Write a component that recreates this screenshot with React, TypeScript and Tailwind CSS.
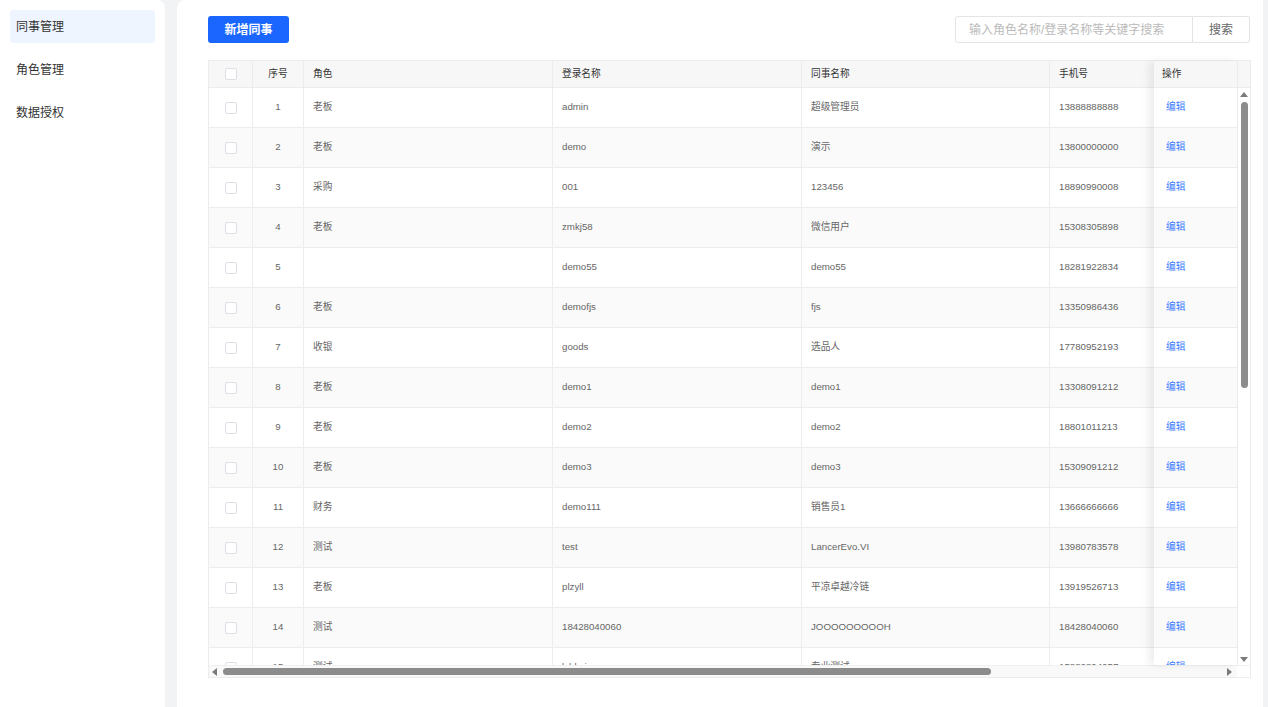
import React from "react";

type Row = { id: number; role: string; login: string; name: string; phone: string };

const rows: Row[] = [
  { id: 1, role: "老板", login: "admin", name: "超级管理员", phone: "13888888888" },
  { id: 2, role: "老板", login: "demo", name: "演示", phone: "13800000000" },
  { id: 3, role: "采购", login: "001", name: "123456", phone: "18890990008" },
  { id: 4, role: "老板", login: "zmkj58", name: "微信用户", phone: "15308305898" },
  { id: 5, role: "", login: "demo55", name: "demo55", phone: "18281922834" },
  { id: 6, role: "老板", login: "demofjs", name: "fjs", phone: "13350986436" },
  { id: 7, role: "收银", login: "goods", name: "选品人", phone: "17780952193" },
  { id: 8, role: "老板", login: "demo1", name: "demo1", phone: "13308091212" },
  { id: 9, role: "老板", login: "demo2", name: "demo2", phone: "18801011213" },
  { id: 10, role: "老板", login: "demo3", name: "demo3", phone: "15309091212" },
  { id: 11, role: "财务", login: "demo111", name: "销售员1", phone: "13666666666" },
  { id: 12, role: "测试", login: "test", name: "LancerEvo.VI", phone: "13980783578" },
  { id: 13, role: "老板", login: "plzyll", name: "平凉卓越冷链", phone: "13919526713" },
  { id: 14, role: "测试", login: "18428040060", name: "JOOOOOOOOOH", phone: "18428040060" },
  { id: 15, role: "测试", login: "lybbxj", name: "专业测试", phone: "15882894257" },
];

function Checkbox() {
  return <span className="block w-[12px] h-[12px] border border-[#dcdfe6] rounded-[2px] bg-white" />;
}

export default function App() {
  return (
    <div className="flex h-[707px] w-[1268px] overflow-hidden bg-[#f2f3f5] font-['Liberation_Sans','Noto_Sans_CJK_SC',sans-serif]">
      {/* Sidebar */}
      <aside className="w-[165px] shrink-0 bg-white rounded-tr-lg pt-[10px] px-[10px] flex flex-col gap-[10px]">
        <div className="h-[33px] rounded-[3px] bg-[#eff5ff] pl-[6px] flex items-center text-[12px] text-[#333]">同事管理</div>
        <div className="h-[33px] pl-[6px] flex items-center text-[12px] text-[#333]">角色管理</div>
        <div className="h-[33px] pl-[6px] flex items-center text-[12px] text-[#333]">数据授权</div>
      </aside>

      {/* Main */}
      <main className="ml-[12px] w-[1086px] shrink-0 bg-white rounded-tl-lg pl-[31px] pt-[16px]">
        <div className="w-[1042px] h-[27px] flex justify-between">
          <button className="w-[81px] h-[27px] rounded-[3px] bg-[#1a66ff] text-white text-[12px] font-bold flex items-center justify-center">
            新增同事
          </button>
          <div className="flex h-[27px]">
            <div className="w-[238px] h-full border border-[#e4e4e4] rounded-l-[3px] pl-[13px] flex items-center text-[12px] text-[#bbbbbb]">
              输入角色名称/登录名称等关键字搜索
            </div>
            <div className="w-[57px] h-full border border-l-0 border-[#e4e4e4] rounded-r-[3px] flex items-center justify-center text-[12px] text-[#666]">
              搜索
            </div>
          </div>
        </div>

        {/* Table */}
        <div className="mt-[17px] w-[1043px] border border-[#ececec] flex flex-col text-[9.7px]">
          <div className="flex h-[604px]">
            {/* scrolling part */}
            <div className="flex-1 min-w-0 overflow-hidden flex flex-col">
              <div className="flex h-[27px] shrink-0 bg-[#f7f7f7] border-b border-[#ececec] text-[#333]">
                <div className="w-[44px] shrink-0 border-r border-[#ececec] flex items-center justify-center"><Checkbox /></div>
                <div className="w-[51px] shrink-0 border-r border-[#ececec] flex items-center justify-center">序号</div>
                <div className="w-[249px] shrink-0 border-r border-[#ececec] flex items-center px-[9px]">角色</div>
                <div className="w-[249px] shrink-0 border-r border-[#ececec] flex items-center px-[9px]">登录名称</div>
                <div className="w-[248px] shrink-0 border-r border-[#ececec] flex items-center px-[9px]">同事名称</div>
                <div className="w-[160px] shrink-0 flex items-center px-[9px]">手机号</div>
              </div>
              {rows.map((r, i) => (
                <div key={r.id} className={`flex h-[40px] shrink-0 border-b border-[#ededed] text-[#666] ${i % 2 === 1 ? "bg-[#fafafa]" : "bg-white"}`}>
                  <div className="w-[44px] shrink-0 border-r border-[#ededed] flex items-center justify-center"><Checkbox /></div>
                  <div className="w-[51px] shrink-0 border-r border-[#ededed] flex items-center justify-center">{r.id}</div>
                  <div className="w-[249px] shrink-0 border-r border-[#ededed] flex items-center px-[9px]">{r.role}</div>
                  <div className="w-[249px] shrink-0 border-r border-[#ededed] flex items-center px-[9px]">{r.login}</div>
                  <div className="w-[248px] shrink-0 border-r border-[#ededed] flex items-center px-[9px]">{r.name}</div>
                  <div className="w-[160px] shrink-0 flex items-center px-[9px]">{r.phone}</div>
                </div>
              ))}
            </div>

            {/* fixed op column */}
            <div className="w-[83px] shrink-0 relative z-10 flex flex-col overflow-hidden bg-white shadow-[-5px_0_8px_rgba(0,0,0,0.07)]">
              <div className="h-[27px] shrink-0 bg-[#f7f7f7] border-b border-[#ececec] flex items-center pl-[8px] text-[#333]">操作</div>
              {rows.map((r, i) => (
                <div key={r.id} className={`h-[40px] shrink-0 border-b border-[#ededed] flex items-center pl-[12px] text-[#3b7cff] ${i % 2 === 1 ? "bg-[#fafafa]" : "bg-white"}`}>
                  编辑
                </div>
              ))}
            </div>

            {/* vertical scrollbar */}
            <div className="w-[13px] shrink-0 flex flex-col border-l border-[#ececec] bg-white">
              <div className="h-[27px] shrink-0 bg-[#f7f7f7] border-b border-[#ececec]" />
              <div className="flex-1 flex flex-col items-center pt-[4px] pb-[3px]">
                <svg width="8" height="5" viewBox="0 0 8 5"><path d="M0 5 L4 0 L8 5 Z" fill="#7a7a7a" /></svg>
                <div className="mt-[5px] w-[7px] h-[286px] rounded-full bg-[#8c8c8c]" />
                <div className="flex-1" />
                <svg width="8" height="5" viewBox="0 0 8 5"><path d="M0 0 L4 5 L8 0 Z" fill="#7a7a7a" /></svg>
              </div>
            </div>
          </div>

          {/* horizontal scrollbar */}
          <div className="flex h-[12px] bg-[#f9f9f9] border-t border-[#f0f0f0]">
            <div className="flex-1 flex items-center pl-[3px] pr-[5px]">
              <svg width="5" height="8" viewBox="0 0 5 8"><path d="M5 0 L0 4 L5 8 Z" fill="#7a7a7a" /></svg>
              <div className="ml-[6px] w-[768px] h-[7px] rounded-full bg-[#8c8c8c]" />
              <div className="flex-1" />
              <svg width="5" height="8" viewBox="0 0 5 8"><path d="M0 0 L5 4 L0 8 Z" fill="#7a7a7a" /></svg>
            </div>
            <div className="w-[13px] bg-white" />
          </div>
        </div>
      </main>
    </div>
  );
}
